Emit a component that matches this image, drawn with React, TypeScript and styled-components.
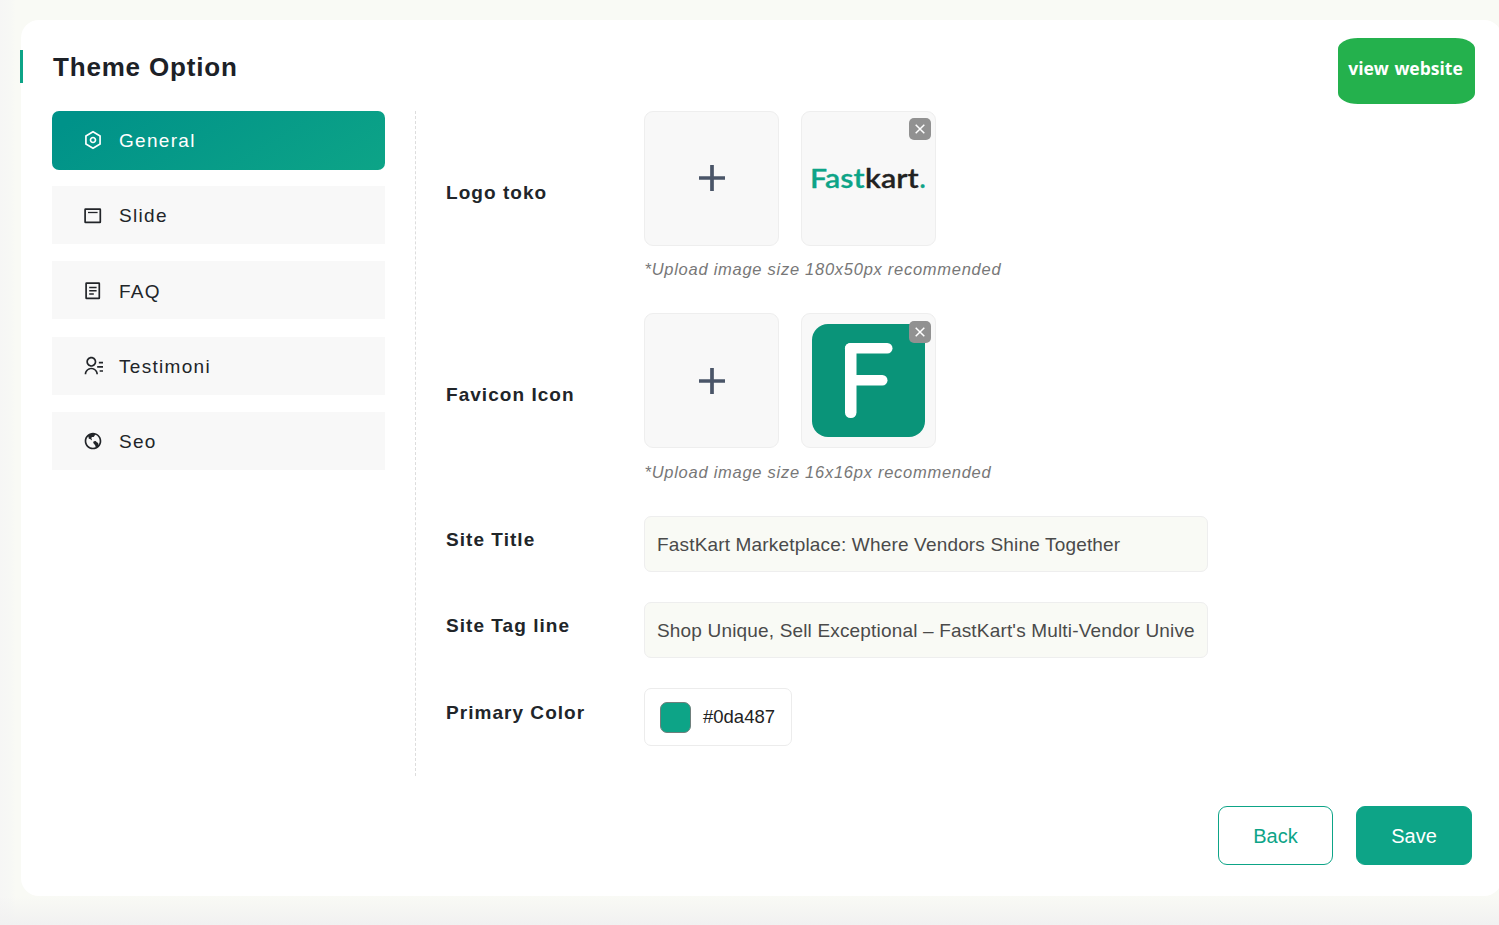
import React from 'react';
import styled, { createGlobalStyle, css } from 'styled-components';
import { RiSettingsLine, RiContactsLine, RiEarthLine } from 'react-icons/ri';

const GlobalStyle = createGlobalStyle`
  *, *::before, *::after { box-sizing: border-box; }
  body {
    margin: 0;
    font-family: "Liberation Sans", Arial, sans-serif;
    color: #222;
    overflow: hidden;
  }
`;

const Page = styled.div`
  height: 925px;
  width: 100%;
  overflow: hidden;
  padding: 20px 0 0 21px;
  background:
    linear-gradient(to bottom, rgba(241, 241, 241, 0) 896px, #f1f1f1 925px),
    linear-gradient(to right, #f6f6f5 0, #f7f8f5 10px, #f9faf5 16px);
`;

const Card = styled.main`
  width: 1481px;
  height: 876px;
  padding: 30px 30px 31px 31px;
  border-radius: 18px;
  background: #fff;
  display: flex;
  flex-direction: column;
`;

const Header = styled.header`
  display: flex;
  justify-content: space-between;
  height: 61px;
  margin-left: -32px;
`;

const Title = styled.h1`
  margin: 0;
  height: 33px;
  padding-left: 30px;
  border-left: 3px solid #0da487;
  font-size: 26px;
  line-height: 34px;
  letter-spacing: 0.82px;
  color: #1c2127;
`;

const WebsiteLink = styled.a`
  width: 137px;
  height: 66px;
  margin: -12px -3px 0 0;
  padding-right: 2px;
  border-radius: 20px / 11px;
  background: #24b14d;
  color: #fff;
  font: 700 17.5px/61px "Open Sans", sans-serif;
  word-spacing: 1px;
  text-align: center;
  white-space: nowrap;
`;

const Content = styled.div`
  display: flex;
  height: 665px;
`;

const Sidebar = styled.nav`
  width: 333px;
  display: grid;
  grid-auto-rows: 75.24px;
  align-content: start;
`;

const Tab = styled.button<{ $active?: boolean }>`
  display: flex;
  align-items: center;
  height: 58px;
  padding: 2.1px 0 0 30.5px;
  gap: 16.5px;
  border: 0;
  background: #f8f8f8;
  color: #222529;
  font: 400 19px "Liberation Sans", Arial, sans-serif;
  letter-spacing: 1.3px;
  ${(p) =>
    p.$active &&
    css`
      height: 59px;
      padding-top: 0;
      border-radius: 7px;
      color: #fff;
      background: linear-gradient(149deg, #009289 8%, #0da487 100%);
    `}
  svg {
    width: 20px;
    height: 20px;
    flex: none;
    margin-bottom: ${(p) => (p.$active ? 2 : 1)}px;
  }
`;

const Form = styled.section`
  margin-left: 30px;
  padding-left: 30px;
  border-left: 1px dashed #dddddd;
  display: flex;
  flex-direction: column;
  gap: 30px;
`;

const Row = styled.div`
  display: grid;
  grid-template-columns: 198px 564px;
  align-items: center;
`;

const Label = styled.label`
  padding-bottom: 8.5px;
  font-size: 19px;
  font-weight: 700;
  line-height: 24px;
  letter-spacing: 1.04px;
  color: #212529;
`;

const Field = styled.div``;

const UploadGroup = styled.div`
  display: flex;
  gap: 22px;
`;

const UploadBox = styled.div`
  position: relative;
  width: 135px;
  height: 135px;
  display: flex;
  align-items: center;
  justify-content: center;
  border: 1px solid #eeeeee;
  border-radius: 9px;
  background: #f8f8f8;
`;

const RemoveButton = styled.button`
  position: absolute;
  top: 6.2px;
  right: 4px;
  width: 22px;
  height: 22px;
  padding: 0;
  border: 0;
  border-radius: 5px;
  background: #919191;
  display: flex;
  align-items: center;
  justify-content: center;
`;

const Hint = styled.p`
  margin: 0;
  height: 37.4px;
  padding: 13.3px 0 0 0.5px;
  font-size: 16.5px;
  line-height: 20px;
  font-style: italic;
  letter-spacing: 0.73px;
  color: #777;
  white-space: nowrap;
`;

const TextInput = styled.input`
  display: block;
  width: 100%;
  height: 56px;
  padding: 2px 12px 0;
  border: 1px solid #eeeeee;
  border-radius: 7px;
  background: #f9faf5;
  color: #4a4a4a;
  font: 400 19px "Liberation Sans", Arial, sans-serif;
  letter-spacing: 0.17px;
  outline: none;
`;

const ColorPicker = styled.div`
  width: 148px;
  height: 58px;
  padding-left: 15px;
  display: flex;
  align-items: center;
  gap: 12px;
  border: 1px solid #ececec;
  border-radius: 7px;
  font-size: 18.5px;
`;

const Swatch = styled.span`
  width: 31px;
  height: 31px;
  margin-top: 1px;
  border: 1px solid #6f7f7c;
  border-radius: 7px;
  background: #0da487;
`;

const Actions = styled.footer`
  display: flex;
  justify-content: flex-end;
  gap: 23px;
  margin-top: 30px;
`;

const ActionButton = styled.button<{ $primary?: boolean }>`
  width: ${(p) => (p.$primary ? 116 : 115)}px;
  height: 59px;
  padding: 1px 0 0;
  border: 1px solid #0da487;
  border-radius: 9px;
  background: ${(p) => (p.$primary ? '#0da487' : '#fff')};
  color: ${(p) => (p.$primary ? '#fff' : '#0da487')};
  font: 400 20px "Liberation Sans", Arial, sans-serif;
`;

const SlideIcon = () => (
  <svg viewBox="0 0 20 20" fill="none" stroke="currentColor" strokeWidth="1.7">
    <rect x="2.1" y="3.2" width="15.2" height="13.2" rx="0.4" />
    <path d="M5 6.5h9.6" strokeWidth="1.3" />
  </svg>
);

const ArticleIcon = () => (
  <svg viewBox="0 0 20 20" fill="none" stroke="currentColor" strokeWidth="1.7">
    <rect x="3.1" y="2.1" width="13.2" height="15.2" rx="0.4" />
    <path d="M6.2 6.5h7.4M6.2 9.8h7.4M6.2 13h4.6" strokeWidth="1.5" />
  </svg>
);

const PlusSvg = styled.svg`
  margin-bottom: 0.6px;
`;

const PlusIcon = () => (
  <PlusSvg width="26" height="26" viewBox="0 0 26 26" fill="none" stroke="#4a5568" strokeWidth="3.7">
    <path d="M13 0v26M0 13h26" />
  </PlusSvg>
);

const CloseIcon = () => (
  <svg width="10" height="10" viewBox="0 0 10 10" fill="none" stroke="#fff" strokeWidth="1.5">
    <path d="M.7.7l8.6 8.6M9.3.7L.7 9.3" />
  </svg>
);

const Wordmark = () => (
  <svg width="117" height="34" viewBox="0 0 117 34">
    <g fontFamily="Lato, sans-serif" fontSize="26" fontWeight="600" strokeWidth="0.3" strokeLinejoin="round">
      <text x="0" y="26" textLength="54.5" lengthAdjust="spacingAndGlyphs" fill="#0da487" stroke="#0da487">
        Fast
      </text>
      <text x="55" y="26" textLength="53.5" lengthAdjust="spacingAndGlyphs" fill="#222" stroke="#222">
        kart
      </text>
      <text x="109.5" y="26" fill="#0da487" stroke="#0da487">
        .
      </text>
    </g>
  </svg>
);

const FaviconMark = () => (
  <svg width="113" height="113" viewBox="0 0 113 113">
    <rect width="113" height="113" rx="16" fill="#0a9479" />
    <g fill="#fff">
      <rect x="33" y="19" width="11.5" height="75" rx="5.5" />
      <rect x="33" y="19" width="47.5" height="10.5" rx="5.2" />
      <rect x="35" y="51" width="40.5" height="10.5" rx="5.2" />
    </g>
  </svg>
);

const tabs = [
  { name: 'General', icon: <RiSettingsLine /> },
  { name: 'Slide', icon: <SlideIcon /> },
  { name: 'FAQ', icon: <ArticleIcon /> },
  { name: 'Testimoni', icon: <RiContactsLine /> },
  { name: 'Seo', icon: <RiEarthLine /> },
];

function ImageField({ label, hint, children }: { label: string; hint: string; children: React.ReactNode }) {
  return (
    <Row>
      <Label>{label}</Label>
      <Field>
        <UploadGroup>
          <UploadBox>
            <PlusIcon />
          </UploadBox>
          <UploadBox>
            {children}
            <RemoveButton aria-label="Remove image">
              <CloseIcon />
            </RemoveButton>
          </UploadBox>
        </UploadGroup>
        <Hint>{hint}</Hint>
      </Field>
    </Row>
  );
}

function TextField({ label, value }: { label: string; value: string }) {
  return (
    <Row>
      <Label>{label}</Label>
      <TextInput aria-label={label} defaultValue={value} />
    </Row>
  );
}

export default function App() {
  return (
    <>
      <GlobalStyle />
      <Page>
        <Card>
          <Header>
            <Title>Theme Option</Title>
            <WebsiteLink>view website</WebsiteLink>
          </Header>
          <Content>
            <Sidebar>
              {tabs.map((tab, i) => (
                <Tab key={tab.name} $active={i === 0}>
                  {tab.icon}
                  {tab.name}
                </Tab>
              ))}
            </Sidebar>
            <Form>
              <ImageField label="Logo toko" hint="*Upload image size 180x50px recommended">
                <Wordmark />
              </ImageField>
              <ImageField label="Favicon Icon" hint="*Upload image size 16x16px recommended">
                <FaviconMark />
              </ImageField>
              <TextField label="Site Title" value="FastKart Marketplace: Where Vendors Shine Together" />
              <TextField
                label="Site Tag line"
                value="Shop Unique, Sell Exceptional – FastKart's Multi-Vendor Unive"
              />
              <Row>
                <Label>Primary Color</Label>
                <ColorPicker>
                  <Swatch />
                  #0da487
                </ColorPicker>
              </Row>
            </Form>
          </Content>
          <Actions>
            <ActionButton>Back</ActionButton>
            <ActionButton $primary>Save</ActionButton>
          </Actions>
        </Card>
      </Page>
    </>
  );
}
